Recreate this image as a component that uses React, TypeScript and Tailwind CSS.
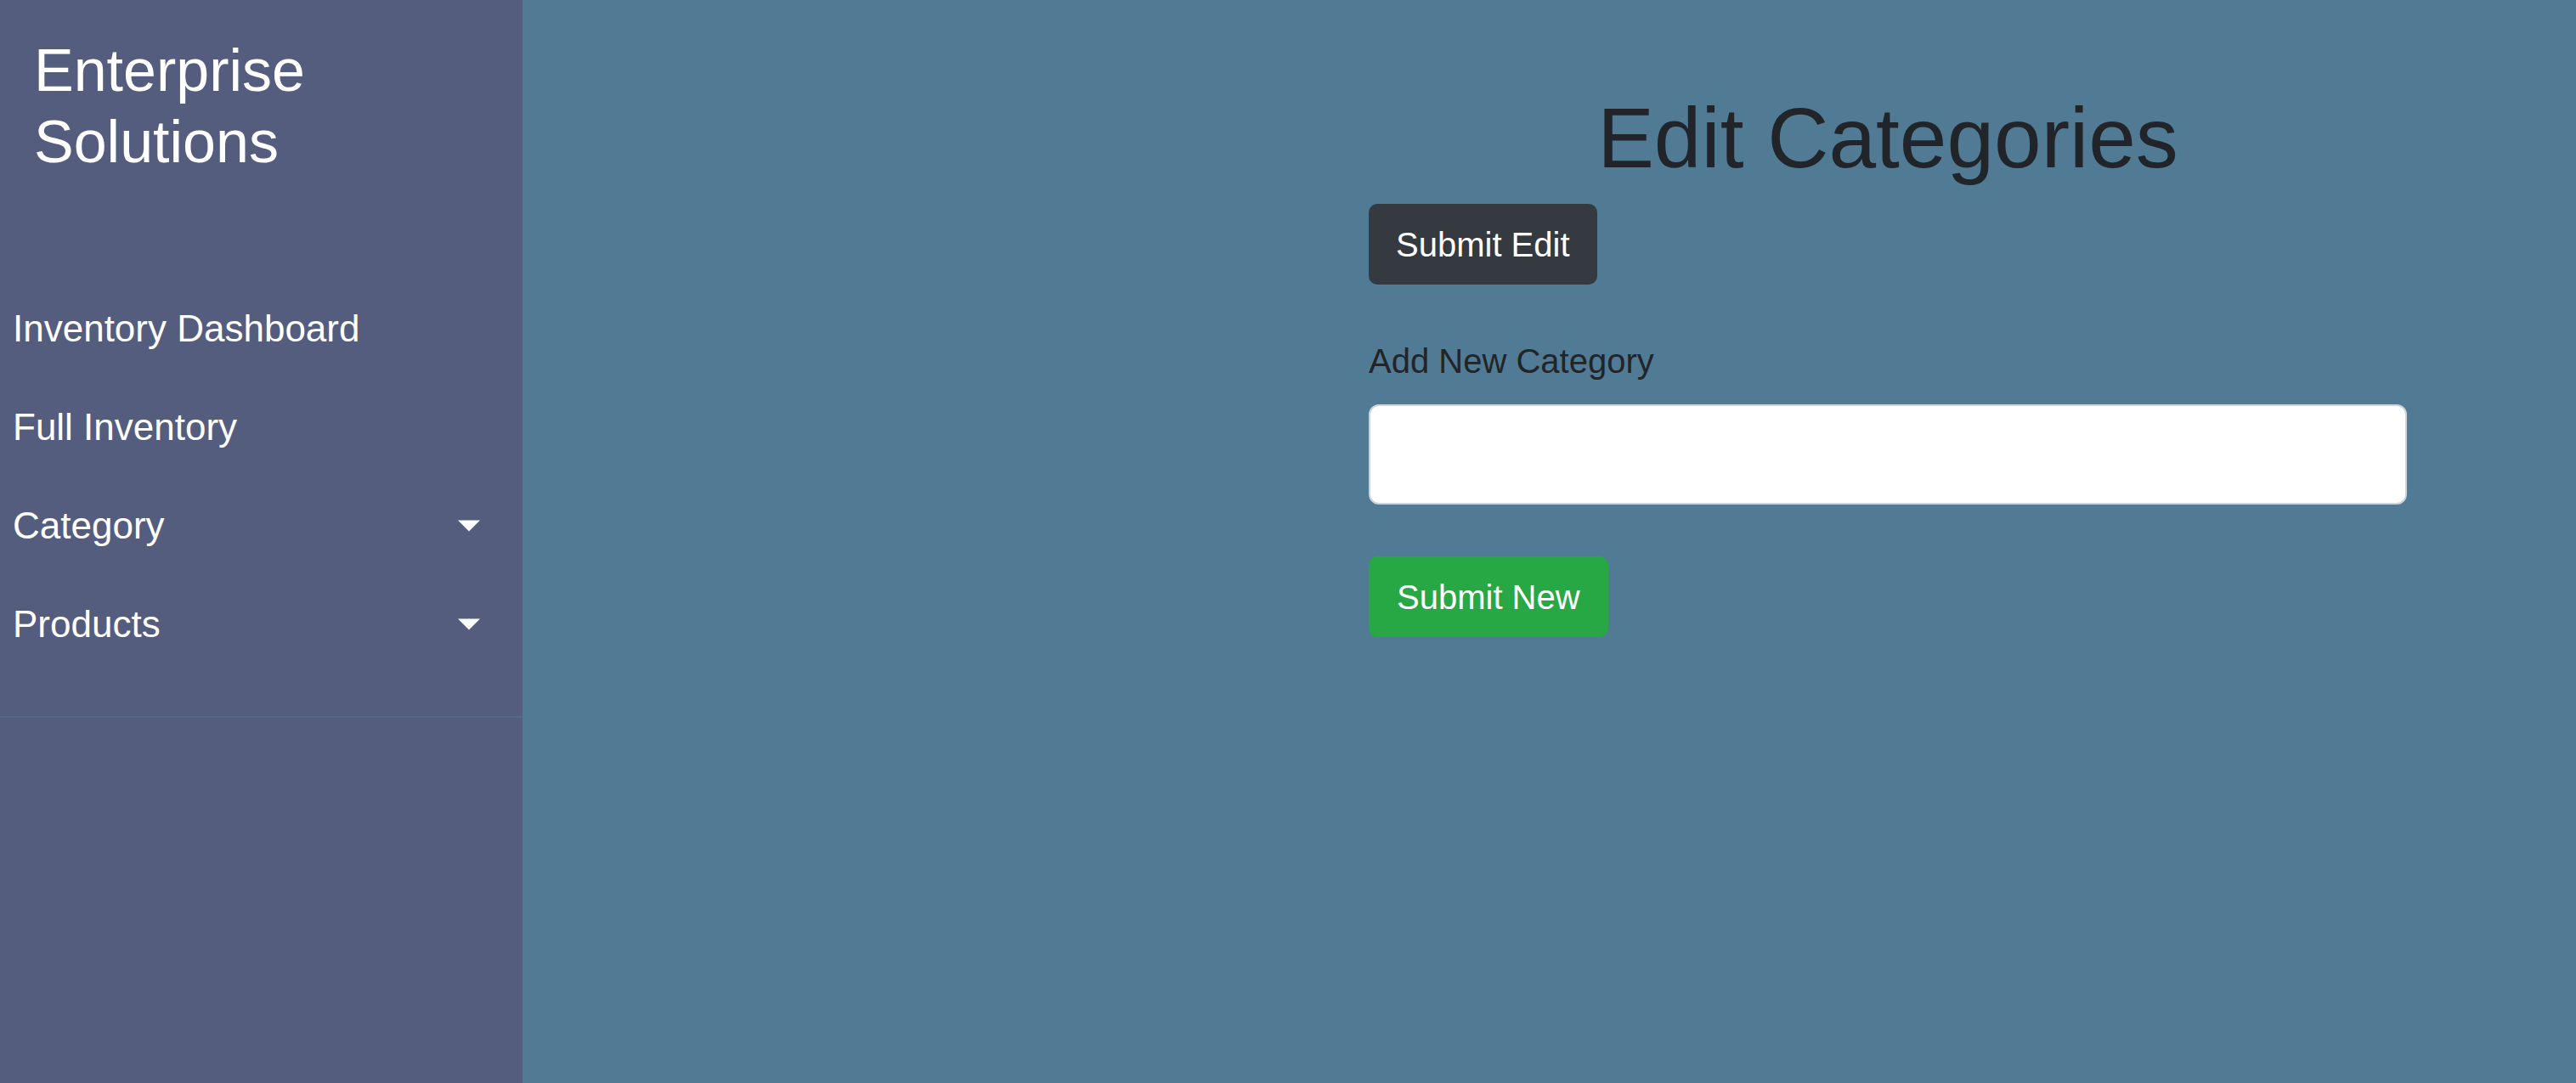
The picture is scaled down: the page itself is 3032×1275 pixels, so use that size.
import React from "react";

function Caret() {
  return (
    <span className="absolute right-[50px] top-1/2 -translate-y-1/2 w-0 h-0 border-t-[13px] border-t-white border-l-[13px] border-l-transparent border-r-[13px] border-r-transparent" />
  );
}

export default function App() {
  const items: { label: string; caret?: boolean }[] = [
    { label: "Inventory Dashboard" },
    { label: "Full Inventory" },
    { label: "Category", caret: true },
    { label: "Products", caret: true },
  ];
  return (
    <div
      className="flex h-screen w-full bg-[#517a94]"
      style={{ fontFamily: '"Liberation Sans", Arial, sans-serif' }}
    >
      <nav className="w-[615px] shrink-0 bg-[#545d7e] text-white">
        <div className="pt-[41px] pb-[70px] pl-[40px]">
          <h3 className="text-[70px] leading-[84px] font-normal">
            Enterprise
            <br />
            Solutions
          </h3>
        </div>
        <ul className="py-[50px] border-b-[2px] border-[#4d6f8c]">
          {items.map((it) => (
            <li key={it.label}>
              <a className="relative block py-[25px] pl-[15px] text-[44px] leading-[66px] text-white">
                {it.label}
                {it.caret && <Caret />}
              </a>
            </li>
          ))}
        </ul>
      </nav>
      <main className="flex-1 pl-[996px]">
        <div className="w-[1222px] pt-[102px]">
          <h1 className="text-center text-[100px] leading-[120px] mb-[18px] text-[#212529] font-normal">
            Edit Categories
          </h1>
          <button className="h-[95px] px-[32px] rounded-[10px] bg-[#343a40] text-white text-[40px] leading-[60px]">
            Submit Edit
          </button>
          <div className="mt-[60px]">
            <label className="block text-[40px] leading-[60px] mb-[21px] text-[#212529]">
              Add New Category
            </label>
            <input
              type="text"
              className="block w-full h-[118px] rounded-[12px] border-[2.5px] border-[#ced4da] bg-white px-[40px] text-[50px] outline-none"
            />
          </div>
          <button className="mt-[61px] h-[95px] px-[33px] rounded-[10px] bg-[#28a745] text-white text-[40px] leading-[60px]">
            Submit New
          </button>
        </div>
      </main>
    </div>
  );
}
